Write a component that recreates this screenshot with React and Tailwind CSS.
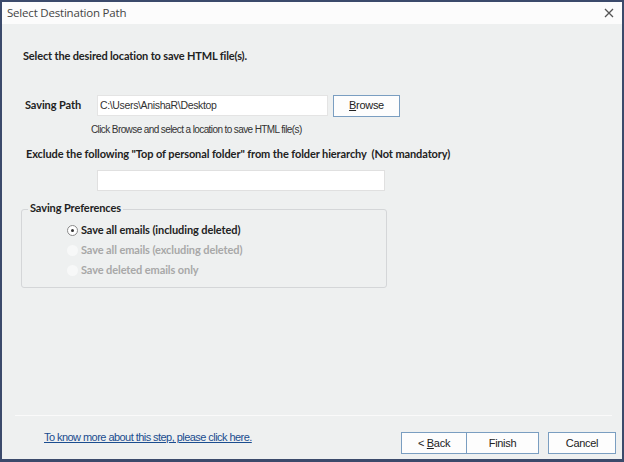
import React from 'react';

const Radio = ({ checked, disabled, label }) => (
  <div className="flex items-center h-[20px]">
    <span
      className={`w-[11px] h-[11px] rounded-full flex items-center justify-center ${
        disabled ? 'bg-[#f7f8f8]' : 'border border-[#8a8a8a] bg-white'
      }`}
    >
      {checked && <span className="w-[3px] h-[3px] rounded-full bg-[#333]" />}
    </span>
    <span className={`ml-[3px] font-bold ${disabled ? 'text-[#a8a8a8]' : 'text-[#222]'}`}>{label}</span>
  </div>
);

const Button = ({ children, className = '' }) => (
  <button className={`h-[22px] bg-[#fdfdfd] border border-[#7a9ec1] text-[11px] text-[#222] font-['Liberation_Sans',sans-serif] tracking-[-0.3px] ${className}`}>
    {children}
  </button>
);

export default function App() {
  return (
    <div className="w-[624px] h-[462px] bg-[#3b4a6b] p-[2px] pb-[3px] overflow-hidden">
      <div className="w-full h-full bg-[#eef0f0] flex flex-col font-['Lato',sans-serif] text-[11px] tracking-[-0.1px] text-[#222]">
        {/* Title bar */}
        <div className="h-[22px] bg-[#fcfcfc] flex items-center justify-between pl-[5px] pr-[8px] shrink-0">
          <span className="font-['Open_Sans',sans-serif] text-[11.5px] text-[#444] tracking-[-0.2px]">Select Destination Path</span>
          <svg width="10" height="10" viewBox="0 0 10 10" className="text-[#555]">
            <path d="M1 1 L9 9 M9 1 L1 9" stroke="currentColor" strokeWidth="1.3" />
          </svg>
        </div>

        <div className="flex-1 flex flex-col pl-[21px]">
          <div className="mt-[24px] font-bold tracking-[-0.15px]">
            Select the desired location to save HTML file(s).
          </div>

          <div className="mt-[30px] flex items-center">
            <span className="w-[74px] font-bold pl-[2px]">Saving Path</span>
            <div className="w-[231px] h-[21px] bg-white border border-[#e4e4e4] flex items-center pl-[2px] font-['Liberation_Sans',sans-serif] text-[10.5px] text-[#333] tracking-[-0.35px]">
              C:\Users\AnishaR\Desktop
            </div>
            <Button className="ml-[5px] w-[67px]">
              <span className="underline">B</span>rowse
            </Button>
          </div>

          <div className="mt-[5px] ml-[68px] font-['Liberation_Sans',sans-serif] text-[10px] text-[#333] tracking-[-0.6px]">
            Click Browse and select a location to save HTML file(s)
          </div>

          <div className="mt-[9px] pl-[3px] font-bold">
            Exclude the following "Top of personal folder" from the folder hierarchy&nbsp; (Not mandatory)
          </div>

          <div className="mt-[8px] ml-[74px] w-[288px] h-[21px] bg-white border border-[#e0e0e0]" />

          {/* Saving Preferences group */}
          <div className="relative mt-[18px] -ml-[2px] w-[366px] h-[79px] border border-[#d4d6d8] rounded-[3px]">
            <span className="absolute -top-[10px] left-[6px] px-[2px] bg-[#eef0f0] font-bold">Saving Preferences</span>
            <div className="pl-[45px] pt-[10px] flex flex-col">
              <Radio checked label="Save all emails (including deleted)" />
              <Radio disabled label="Save all emails (excluding deleted)" />
              <Radio disabled label="Save deleted emails only" />
            </div>
          </div>

          <div className="flex-1" />

          <div className="ml-[-8px] w-[597px] h-[1px] bg-[#fafafa]" />

          <div className="flex items-start h-[43px] pt-[16px]">
            <a className="ml-[21px] mt-[-3px] text-[11px] text-[#1a4d8f] underline font-['Liberation_Sans',sans-serif] tracking-[-0.55px]">
              To know more about this step, please click here.
            </a>
            <div className="flex-1" />
            <div className="flex mr-[6px]">
              <Button className="w-[66px]">
                &lt; <span className="underline">B</span>ack
              </Button>
              <Button className="w-[72px] border-l-0">Finish</Button>
              <Button className="ml-[9px] w-[68px]">Cancel</Button>
            </div>
          </div>
        </div>
      </div>
    </div>
  );
}
